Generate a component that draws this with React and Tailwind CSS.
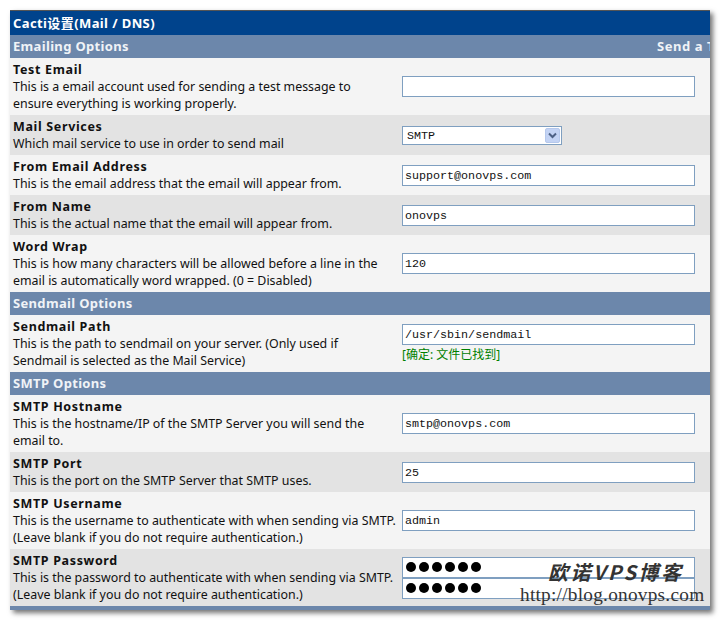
const sans = "font-['Noto_Sans','Noto_Sans_CJK_SC',sans-serif]";

const inputClass =
  "block h-[21px] w-[293px] border border-[#7f9fc0] bg-white px-[2px] font-['Liberation_Mono','Noto_Sans_CJK_SC',monospace] text-[11.7px] leading-[21px] text-[#111]";

function SectionHeader({ title, right }) {
  return (
    <div className="flex h-[23px] items-center justify-between overflow-hidden bg-[#6c87ab] pl-[3px] text-[13px] font-bold tracking-[0.33px] text-[#f0f3f7]">
      <span>{title}</span>
      {right && <span className="w-[53px] shrink-0 whitespace-nowrap tracking-[0.55px]">{right}</span>}
    </div>
  );
}

function Row({ name, desc, shade, height, children }) {
  return (
    <div
      className={`flex ${height} ${shade ? "bg-[#e3e3e3]" : "bg-[#f4f4f4]"}`}
    >
      <div className="w-[392px] shrink-0 pl-[3px] pt-[3px] text-[12.4px] leading-[17px] text-[#111]">
        <div className="text-[12.5px] font-bold tracking-[0.65px]">{name}</div>
        {desc.map((line) => (
          <div key={line} className="whitespace-nowrap">
            {line}
          </div>
        ))}
      </div>
      <div className="flex flex-col justify-center">{children}</div>
    </div>
  );
}

function TextValue({ value }) {
  return <div className={inputClass}>{value}</div>;
}

function Dots() {
  return (
    <div className="flex h-[21px] w-[293px] items-center gap-[3px] border border-[#7f9fc0] bg-white pl-[3px]">
      {[0, 1, 2, 3, 4, 5].map((i) => (
        <span key={i} className="h-[10px] w-[10px] rounded-full bg-black" />
      ))}
    </div>
  );
}

export default function App() {
  return (
    <div className={`relative h-[621px] w-[721px] overflow-hidden bg-white pl-[10px] pt-[10px] ${sans}`}>
      <div className="w-[700px] border-t border-[#555] shadow-[3px_3px_5px_rgba(0,0,0,0.55)]">
        <div className="flex h-[24px] items-center bg-[#00438c] pl-[3px] pt-[2px] text-[13px] font-bold tracking-[0.4px] text-white">
          Cacti设置(Mail / DNS)
        </div>
        <SectionHeader title="Emailing Options" right="Send a Test Email" />
        <Row
          name="Test Email"
          height="h-[57px]"
          desc={[
            "This is a email account used for sending a test message to",
            "ensure everything is working properly.",
          ]}
        >
          <TextValue value="" />
        </Row>
        <Row
          shade
          name="Mail Services"
          height="h-[40px]"
          desc={["Which mail service to use in order to send mail"]}
        >
          <div className="flex h-[19px] w-[160px] items-center justify-between border border-[#7f9fc0] bg-white pl-[4px] pr-px font-['Liberation_Mono',monospace] text-[11.7px] leading-[19px] text-[#111]">
            <span className="pt-[2px]">SMTP</span>
            <span className="flex h-[15px] w-[15px] items-center justify-center rounded-[2px] border border-[#b5c8ec] bg-[#c3d3f4]">
              <svg width="9" height="7" viewBox="0 0 9 7" fill="none">
                <path d="M1 1.5 4.5 5 8 1.5" stroke="#4d6185" strokeWidth="2" />
              </svg>
            </span>
          </div>
        </Row>
        <Row
          name="From Email Address"
          height="h-[40px]"
          desc={["This is the email address that the email will appear from."]}
        >
          <TextValue value="support@onovps.com" />
        </Row>
        <Row
          shade
          name="From Name"
          height="h-[40px]"
          desc={["This is the actual name that the email will appear from."]}
        >
          <TextValue value="onovps" />
        </Row>
        <Row
          name="Word Wrap"
          height="h-[57px]"
          desc={[
            "This is how many characters will be allowed before a line in the",
            "email is automatically word wrapped. (0 = Disabled)",
          ]}
        >
          <TextValue value="120" />
        </Row>
        <SectionHeader title="Sendmail Options" />
        <Row
          name="Sendmail Path"
          height="h-[57px]"
          desc={[
            "This is the path to sendmail on your server. (Only used if",
            "Sendmail is selected as the Mail Service)",
          ]}
        >
          <TextValue value="/usr/sbin/sendmail" />
          <div className="mt-[2px] text-[12px] leading-[16px] text-[#008000]">[确定: 文件已找到]</div>
        </Row>
        <SectionHeader title="SMTP Options" />
        <Row
          name="SMTP Hostname"
          height="h-[57px]"
          desc={[
            "This is the hostname/IP of the SMTP Server you will send the",
            "email to.",
          ]}
        >
          <TextValue value="smtp@onovps.com" />
        </Row>
        <Row
          shade
          name="SMTP Port"
          height="h-[40px]"
          desc={["This is the port on the SMTP Server that SMTP uses."]}
        >
          <TextValue value="25" />
        </Row>
        <Row
          name="SMTP Username"
          height="h-[57px]"
          desc={[
            "This is the username to authenticate with when sending via SMTP.",
            "(Leave blank if you do not require authentication.)",
          ]}
        >
          <TextValue value="admin" />
        </Row>
        <Row
          shade
          name="SMTP Password"
          height="h-[57px]"
          desc={[
            "This is the password to authenticate with when sending via SMTP.",
            "(Leave blank if you do not require authentication.)",
          ]}
        >
          <Dots />
          <Dots />
        </Row>
        <div className="h-[4px] bg-[#6c87ab]" />
      </div>

      {/* watermark sits over the password inputs */}
      <div className="absolute left-[548px] top-[560px] font-['Noto_Sans_CJK_SC',sans-serif] text-[20px] font-bold italic leading-[24px] tracking-[2.5px] text-[#333]">
        欧诺VPS博客
      </div>
      <div className="absolute left-[520px] top-[585px] font-['Liberation_Serif',serif] text-[19.3px] leading-[20px] tracking-[0.25px] text-[#333]">
        http://blog.onovps.com
      </div>
    </div>
  );
}
